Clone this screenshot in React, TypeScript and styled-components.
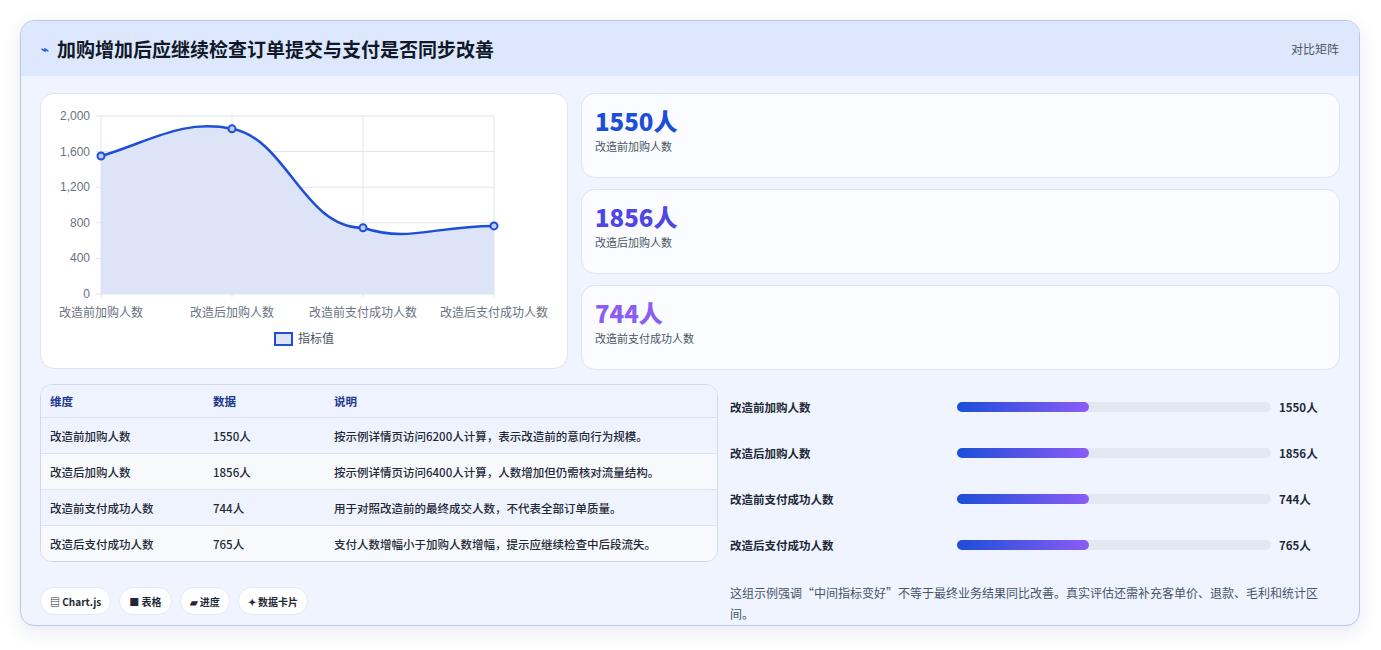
import React from "react";
import styled, { createGlobalStyle } from "styled-components";

const G = createGlobalStyle`
  body{margin:0;background:#fff;font-family:"Noto Sans CJK SC","Noto Sans",sans-serif;}
`;
const Page = styled.div`padding:20px 21px 22px 20px;`;
const Card = styled.div`
  border:1px solid #b9c6ee;border-radius:14px;overflow:hidden;
  background:#eff4ff;box-shadow:0 6px 18px rgba(60,80,140,.12);height:606px;box-sizing:border-box;
`;
const Header = styled.div`
  height:55px;background:#dde7fd;display:flex;align-items:center;justify-content:space-between;
  padding:0 20px 0 20px;box-sizing:border-box;
`;
const Title = styled.h1`
  margin:0;font-size:19px;font-weight:700;color:#111827;display:flex;align-items:center;gap:8px;
`;
const Tag = styled.span`font-size:12px;color:#4b5563;`;
const Body = styled.div`padding:17px 19px 0 19px;`;
const Top = styled.div`display:grid;grid-template-columns:528px 1fr;gap:13px;`;
const Panel = styled.div`
  background:#fff;border:1px solid #dde4f3;border-radius:14px;box-sizing:border-box;
`;
const ChartPanel = styled(Panel)`height:276px;`;
const Stats = styled.div`display:flex;flex-direction:column;gap:11px;`;
const Stat = styled(Panel)`height:85px;padding:12px 13px;background:#fafcff;`;
const Big = styled.div<{c:string}>`font-size:24px;font-weight:800;color:${p=>p.c};line-height:30px;`;
const Small = styled.div`font-size:11px;color:#4b5563;margin-top:2px;`;
const Bottom = styled.div`display:grid;grid-template-columns:678px 1fr;gap:12px;margin-top:14px;`;
const Table = styled.div`border:1px solid #cfd8ec;border-radius:12px;overflow:hidden;background:#fff;`;
const Row = styled.div<{h?:boolean;alt?:boolean}>`
  display:grid;grid-template-columns:163px 121px 1fr;padding-left:9px;
  height:${p=>p.h?32:35}px;align-items:center;font-size:11.5px;
  color:${p=>p.h?"#1e3a8a":"#1f2937"};font-weight:${p=>p.h?600:500};
  background:${p=>p.h?"#eef3ff":p.alt?"#f7f9fd":"#eef3fd"};
  border-bottom:1px solid #dde3f0;&:last-child{border-bottom:none;}
`;
const Chips = styled.div`display:flex;gap:8px;margin-top:25px;`;
const Chip = styled.span`
  background:#fff;border:1px solid #e5e9f2;border-radius:14px;height:26px;padding:0 9px;
  display:flex;align-items:center;font-size:10px;font-weight:600;color:#1f2937;
`;
const Bars = styled.div`display:flex;flex-direction:column;`;
const BarRow = styled.div`display:grid;grid-template-columns:227px 314px 1fr;align-items:center;height:46px;padding-top:0;`;
const BarLabel = styled.span`font-size:11.5px;font-weight:600;color:#1f2937;`;
const Track = styled.div`height:10px;background:#e2e7f0;border-radius:5px;`;
const Fill = styled.div`height:100%;border-radius:5px;background:linear-gradient(90deg,#1d4ed8,#8b5cf6);`;
const BarVal = styled.span`font-size:11.5px;font-weight:700;color:#1f2937;padding-left:8px;`;
const Note = styled.p`margin:14px 0 0;font-size:12px;line-height:21px;color:#475569;`;

const vals=[1550,1856,744,765];
const labels=["改造前加购人数","改造后加购人数","改造前支付成功人数","改造后支付成功人数"];
const X=[60,191,322,453]; const Y=vals.map(v=>200-v/2000*178);

function Chart(){
  const d=`M${X[0]},${Y[0]} C${X[0]+50},${Y[0]-15} ${X[1]-50},${Y[1]-10} ${X[1]},${Y[1]} C${X[1]+55},${Y[1]+10} ${X[2]-60},${Y[2]} ${X[2]},${Y[2]} C${X[2]+45},${Y[2]+15} ${X[3]-60},${Y[3]} ${X[3]},${Y[3]}`;
  const ticks=[0,400,800,1200,1600,2000];
  return <svg width="526" height="274" style={{display:"block"}}>
    <g transform="translate(0,0)">
    {ticks.map(t=>{const y=200-t/2000*178;return <g key={t}><line x1={55} x2={453} y1={y} y2={y} stroke="#e1e5ee"/><text x={49} y={y+4} fontSize="12" fill="#6b7280" textAnchor="end" fontFamily="Liberation Sans">{t.toLocaleString("en-US")}</text></g>})}
    {X.map(x=><line key={x} x1={x} x2={x} y1={22} y2={204} stroke="#e1e5ee"/>)}
    <path d={`${d} L${X[3]},200 L${X[0]},200 Z`} fill="#dde4f7"/>
    <path d={d} fill="none" stroke="#1d4ed8" strokeWidth="2.5"/>
    {X.map((x,i)=><circle key={i} cx={x} cy={Y[i]} r="3.5" fill="#bfcdf5" stroke="#1d4ed8" strokeWidth="2"/>)}
    {X.map((x,i)=><text key={i} x={x} y={223} fontSize="12" fill="#6b7280" textAnchor="middle">{labels[i]}</text>)}
    <rect x={234} y={239} width={17} height={12} fill="#dde4f7" stroke="#1d4ed8" strokeWidth="2"/>
    <text x={257} y={249} fontSize="12" fill="#4b5563">指标值</text>
    </g>
  </svg>;
}

const rows=[
  ["改造前加购人数","1550人","按示例详情页访问6200人计算，表示改造前的意向行为规模。"],
  ["改造后加购人数","1856人","按示例详情页访问6400人计算，人数增加但仍需核对流量结构。"],
  ["改造前支付成功人数","744人","用于对照改造前的最终成交人数，不代表全部订单质量。"],
  ["改造后支付成功人数","765人","支付人数增幅小于加购人数增幅，提示应继续检查中后段流失。"],
];

export default function App(){
  return <Page><G/><Card>
    <Header><Title><span style={{color:"#2563eb",fontSize:13}}>⌁</span>加购增加后应继续检查订单提交与支付是否同步改善</Title><Tag>对比矩阵</Tag></Header>
    <Body>
      <Top>
        <ChartPanel><Chart/></ChartPanel>
        <Stats>
          <Stat><Big c="#1d4ed8">1550人</Big><Small>改造前加购人数</Small></Stat>
          <Stat><Big c="#4f46e5">1856人</Big><Small>改造后加购人数</Small></Stat>
          <Stat><Big c="#8b5cf6">744人</Big><Small>改造前支付成功人数</Small></Stat>
        </Stats>
      </Top>
      <Bottom>
        <div>
          <Table>
            <Row h><span>维度</span><span>数据</span><span>说明</span></Row>
            {rows.map((r,i)=><Row key={i} alt={i%2===1}><span>{r[0]}</span><span>{r[1]}</span><span>{r[2]}</span></Row>)}
          </Table>
          <Chips><Chip>▤ Chart.js</Chip><Chip>■ 表格</Chip><Chip>▰ 进度</Chip><Chip>✦ 数据卡片</Chip></Chips>
        </div>
        <div>
          <Bars>{rows.map((r,i)=><BarRow key={i}><BarLabel>{r[0]}</BarLabel><Track><Fill style={{width:"42%"}}/></Track><BarVal>{r[1]}</BarVal></BarRow>)}</Bars>
          <Note>这组示例强调“中间指标变好”不等于最终业务结果同比改善。真实评估还需补充客单价、退款、毛利和统计区间。</Note>
        </div>
      </Bottom>
    </Body>
  </Card></Page>;
}
